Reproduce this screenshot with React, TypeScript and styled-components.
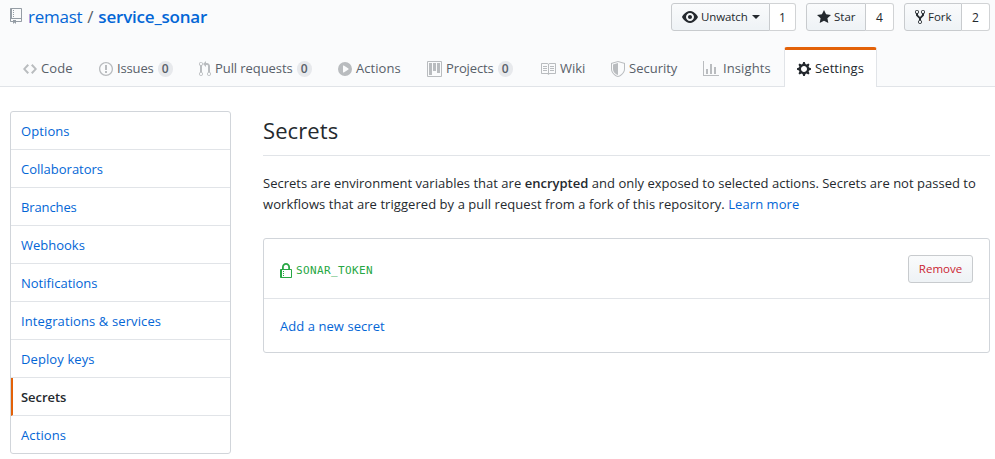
import React from "react";
import styled, { createGlobalStyle } from "styled-components";

const GlobalStyle = createGlobalStyle`
  * { box-sizing: border-box; }
  body {
    margin: 0;
    background: #fff;
    color: #24292e;
    font: 13px/21px "Open Sans", "Noto Sans", sans-serif;
    overflow: hidden;
  }
  a { color: #0366d6; text-decoration: none; }
`;

const icons = {
  repo: [12, "M4 9H3V8h1v1zm0-3H3v1h1V6zm0-2H3v1h1V4zm0-2H3v1h1V2zm8-1v12c0 .55-.45 1-1 1H6v2l-1.5-1.5L3 16v-2H1c-.55 0-1-.45-1-1V1c0-.55.45-1 1-1h10c.55 0 1 .45 1 1zm-1 10H1v2h2v-1h3v1h5v-2zm0-10H2v9h9V1z"],
  eye: [16, "M8.06 2C3 2 0 8 0 8s3 6 8.06 6C13 14 16 8 16 8s-3-6-7.94-6zM8 12c-2.2 0-4-1.78-4-4 0-2.2 1.8-4 4-4 2.22 0 4 1.8 4 4 0 2.22-1.78 4-4 4zm2-4c0 1.11-.89 2-2 2-1.11 0-2-.89-2-2 0-1.11.89-2 2-2 1.11 0 2 .89 2 2z"],
  star: [14, "M14 6l-4.9-.64L7 1 4.9 5.36 0 6l3.6 3.26L2.67 14 7 11.67 11.33 14l-.93-4.74L14 6z"],
  fork: [10, "M8 1a1.993 1.993 0 00-1 3.72V6L5 8 3 6V4.72A1.993 1.993 0 002 1a1.993 1.993 0 00-1 3.72V6.5l3 3v1.78A1.993 1.993 0 005 15a1.993 1.993 0 001-3.72V9.5l3-3V4.72A1.993 1.993 0 008 1zM2 4.2C1.34 4.2.8 3.65.8 3c0-.65.55-1.2 1.2-1.2.65 0 1.2.55 1.2 1.2 0 .65-.55 1.2-1.2 1.2zm3 10c-.66 0-1.2-.55-1.2-1.2 0-.65.55-1.2 1.2-1.2.65 0 1.2.55 1.2 1.2 0 .65-.55 1.2-1.2 1.2zm3-10c-.66 0-1.2-.55-1.2-1.2 0-.65.55-1.2 1.2-1.2.65 0 1.2.55 1.2 1.2 0 .65-.55 1.2-1.2 1.2z"],
  code: [14, "M9.5 3L8 4.5 11.5 8 8 11.5 9.5 13 14 8 9.5 3zm-5 0L0 8l4.5 5L6 11.5 2.5 8 6 4.5 4.5 3z"],
  issue: [14, "M7 2.3c3.14 0 5.7 2.56 5.7 5.7s-2.56 5.7-5.7 5.7A5.71 5.71 0 011.3 8c0-3.14 2.56-5.7 5.7-5.7zM7 1C3.14 1 0 4.14 0 8s3.14 7 7 7 7-3.14 7-7-3.14-7-7-7zm1 3H6v5h2V4zm0 6H6v2h2v-2z"],
  pull: [12, "M11 11.28V5c-.03-.78-.34-1.47-.94-2.06C9.46 2.35 8.78 2.03 8 2H7V0L4 3l3 3V4h1c.27.02.48.11.69.31.21.2.3.42.31.69v6.28A1.993 1.993 0 0010 15a1.993 1.993 0 001-3.72zm-1 2.92c-.66 0-1.2-.55-1.2-1.2 0-.65.55-1.2 1.2-1.2.65 0 1.2.55 1.2 1.2 0 .65-.55 1.2-1.2 1.2zM4 3c0-1.11-.89-2-2-2a1.993 1.993 0 00-1 3.72v6.56A1.993 1.993 0 002 15a1.993 1.993 0 001-3.72V4.72c.59-.34 1-.98 1-1.72zm-.8 10c0 .66-.55 1.2-1.2 1.2-.65 0-1.2-.55-1.2-1.2 0-.65.55-1.2 1.2-1.2.65 0 1.2.55 1.2 1.2zM2 4.2C1.34 4.2.8 3.65.8 3c0-.65.55-1.2 1.2-1.2.65 0 1.2.55 1.2 1.2 0 .65-.55 1.2-1.2 1.2z"],
  play: [14, "M14 8A7 7 0 110 8a7 7 0 0114 0zm-8.223 3.482l4.599-3.066a.5.5 0 000-.832L5.777 4.518A.5.5 0 005 4.934v6.132a.5.5 0 00.777.416z"],
  project: [15, "M10 12h3V2h-3v10zm-4-2h3V2H6v8zm-4 4h3V2H2v12zm-1 1h13V1H1v14zM14 0H1a1 1 0 00-1 1v14a1 1 0 001 1h13a1 1 0 001-1V1a1 1 0 00-1-1z"],
  book: [16, "M3 5h4v1H3V5zm0 3h4V7H3v1zm0 2h4V9H3v1zm11-5h-4v1h4V5zm0 2h-4v1h4V7zm0 2h-4v1h4V9zm2-6v9c0 .55-.45 1-1 1H9.5l-1 1-1-1H2c-.55 0-1-.45-1-1V3c0-.55.45-1 1-1h5.5l1 1 1-1H15c.55 0 1 .45 1 1zm-8 .5L7.5 3H2v9h6V3.5zm7-.5H9.5l-.5.5V12h6V3z"],
  shield: [14, "M0 2l7-2 7 2v6.02C14 12.69 8.69 16 7 16c-1.69 0-7-3.31-7-7.98V2zm1 .75L7 1l6 1.75v5.268C13 12.104 8.449 15 7 15c-1.449 0-6-2.896-6-6.982V2.75zm1 .75L7 2v12c-1.207 0-5-2.482-5-5.985V3.5z"],
  graph: [16, "M16 14v1H0V0h1v14h15zM5 13H3V8h2v5zm4 0H7V3h2v10zm4 0h-2V6h2v7z"],
  gear: [14, "M14 8.77v-1.6l-1.94-.64-.45-1.09.88-1.84-1.13-1.13-1.81.91-1.09-.45-.69-1.92h-1.6l-.63 1.94-1.11.45-1.84-.88-1.13 1.13.91 1.81-.45 1.09L0 7.23v1.59l1.94.64.45 1.09-.88 1.84 1.13 1.13 1.81-.91 1.09.45.69 1.92h1.59l.63-1.94 1.11-.45 1.84.88 1.13-1.13-.92-1.81.47-1.09L14 8.75v.02zM7 11c-1.66 0-3-1.34-3-3s1.34-3 3-3 3 1.34 3 3-1.34 3-3 3z"],
  lock: [12, "M4 13H3v-1h1v1zm8-6v7c0 .55-.45 1-1 1H1c-.55 0-1-.45-1-1V7c0-.55.45-1 1-1h1V4c0-2.2 1.8-4 4-4s4 1.8 4 4v2h1c.55 0 1 .45 1 1zM3.8 6h4.41V4c0-1.22-.98-2.2-2.2-2.2-1.22 0-2.2.98-2.2 2.2v2H3.8zM11 7H2v7h9V7zM4 8H3v1h1V8zm0 2H3v1h1v-1z"],
} as const;

type IconName = keyof typeof icons;

const Svg = styled.svg`
  display: block;
  flex: none;
  fill: currentColor;
`;

function Icon({ name }: { name: IconName }) {
  const [width, d] = icons[name];
  return (
    <Svg width={width} height={16} viewBox={`0 0 ${width} 16`} aria-hidden="true">
      <path fillRule="evenodd" d={d} />
    </Svg>
  );
}

const Label = styled.span<{ $spacing?: number }>`
  letter-spacing: ${(p) => p.$spacing ?? 0}px;
  white-space: nowrap;
`;

const Header = styled.header`
  display: flex;
  flex-direction: column;
  justify-content: space-between;
  height: 87px;
  background: #fafbfc;
  border-bottom: 1px solid #e1e4e8;
`;

const TitleBar = styled.div`
  display: flex;
  justify-content: space-between;
  padding: 3px 5px 0 10px;
`;

const RepoTitle = styled.h1`
  display: flex;
  height: 28px;
  margin: 0;
  font-size: 17px;
  line-height: 28px;
  font-weight: 400;
  color: #586069;
`;

const RepoIcon = styled.span`
  padding-top: 5px;
  margin-right: 6px;
  color: #959da5;
`;

const Slash = styled.span`
  width: 16px;
  text-align: center;
`;

const RepoName = styled.a`
  font-weight: 600;
  letter-spacing: -0.2px;
`;

const Actions = styled.div`
  display: flex;
  gap: 10px;
`;

const ActionGroup = styled.div`
  display: flex;
  height: 28px;
  font-size: 11.5px;
  line-height: 28px;
  font-weight: 500;
`;

const ActionButton = styled.button<{ $width: number }>`
  display: flex;
  align-items: center;
  width: ${(p) => p.$width}px;
  height: 28px;
  padding: 0 10px;
  gap: 3px;
  border: 1px solid #c8cbce;
  border-radius: 3px 0 0 3px;
  background: linear-gradient(#fafbfc, #eff3f6 90%);
  color: #24292e;
  font: inherit;
`;

const Caret = styled.span`
  margin-left: 1px;
  border: 4px solid transparent;
  border-top-color: currentColor;
  border-bottom: 0;
`;

const Count = styled.a<{ $width: number }>`
  width: ${(p) => p.$width}px;
  border: 1px solid #d1d3d5;
  border-left: 0;
  border-radius: 0 3px 3px 0;
  background: #fff;
  color: #24292e;
  font-size: 12px;
  text-align: center;
`;

const Tabs = styled.nav`
  display: flex;
  height: 40px;
  padding-left: 10px;
  margin-bottom: -1px;
`;

const Tab = styled.a<{ $width: number; $active?: boolean }>`
  display: flex;
  align-items: center;
  gap: 4px;
  width: ${(p) => p.$width}px;
  padding: 0 0 0 12px;
  border: 1px solid transparent;
  border-top-width: 3px;
  border-bottom: 0;
  border-radius: 3px 3px 0 0;
  && { color: ${(p) => (p.$active ? "#24292e" : "#586069")}; }
  ${(p) => p.$active && "background: #fff; border-color: #e36209 #e1e4e8 transparent;"}
`;

const TabIcon = styled.span<{ $active?: boolean }>`
  color: ${(p) => (p.$active ? "#24292e" : "#b9bcbf")};
`;

const Badge = styled.span`
  width: 15px;
  height: 16px;
  border-radius: 8px;
  background: #e7e9ec;
  font-size: 12px;
  line-height: 16px;
  font-weight: 600;
  text-align: center;
`;

const Page = styled.main`
  display: grid;
  grid-template-columns: 221px 727px;
  column-gap: 32px;
  align-items: start;
  padding: 24px 0 0 10px;
`;

const Menu = styled.nav`
  border: 1px solid #d1d5da;
  border-radius: 3px;
`;

const MenuItem = styled.a<{ $active?: boolean }>`
  display: block;
  height: 38px;
  padding-left: ${(p) => (p.$active ? 8 : 10)}px;
  border-left: ${(p) => (p.$active ? "2px solid #e36209" : "0")};
  border-bottom: 1px solid #e1e4e8;
  line-height: 38px;
  && { color: ${(p) => (p.$active ? "#24292e" : "#0366d6")}; }
  font-weight: ${(p) => (p.$active ? 600 : 400)};
  &:last-child { height: 37px; border-bottom: 0; }
`;

const Heading = styled.h2`
  height: 45px;
  margin: 0 0 17px;
  border-bottom: 1px solid #e1e4e8;
  font-size: 22px;
  line-height: 39px;
  font-weight: 400;
  letter-spacing: 0.1px;
`;

const Description = styled.p`
  margin: 0 0 23px;
  white-space: nowrap;
  strong { font-weight: 600; }
`;

const SecretBox = styled.section`
  border: 1px solid #d1d5da;
  border-radius: 3px;
`;

const SecretRow = styled.div`
  display: flex;
  align-items: center;
  justify-content: space-between;
  height: 60px;
  padding: 0 16px;
  border-bottom: 1px solid #e1e4e8;
`;

const SecretName = styled.div`
  display: flex;
  align-items: center;
  gap: 4px;
  padding-top: 4px;
  color: #28a745;
`;

const SecretCode = styled.code`
  font: 11px/16px "DejaVu Sans Mono", monospace;
  letter-spacing: 0.38px;
`;

const RemoveButton = styled.button`
  width: 65px;
  height: 28px;
  padding: 0;
  border: 1px solid #c8cbce;
  border-radius: 3px;
  background: linear-gradient(#fafbfc, #eff3f6 90%);
  color: #cb2431;
  font: 500 11.5px/26px "Open Sans", sans-serif;
`;

const AddRow = styled.div`
  height: 53px;
  padding-left: 16px;
  line-height: 54px;
`;

type TabData = { icon: IconName; label: string; width: number; spacing: number; count?: number; active?: boolean };

const tabs: TabData[] = [
  { icon: "code", label: "Code", width: 76, spacing: 0.1 },
  { icon: "issue", label: "Issues", width: 100, spacing: -0.15, count: 0 },
  { icon: "pull", label: "Pull requests", width: 139, spacing: -0.08, count: 0 },
  { icon: "play", label: "Actions", width: 89, spacing: 0.05 },
  { icon: "project", label: "Projects", width: 113, spacing: -0.12, count: 0 },
  { icon: "book", label: "Wiki", width: 71, spacing: 0 },
  { icon: "shield", label: "Security", width: 92, spacing: 0 },
  { icon: "graph", label: "Insights", width: 94, spacing: 0.1 },
  { icon: "gear", label: "Settings", width: 93, spacing: 0.1, active: true },
];

const menu: { label: string; spacing: number; active?: boolean }[] = [
  { label: "Options", spacing: 0.1 },
  { label: "Collaborators", spacing: 0 },
  { label: "Branches", spacing: -0.12 },
  { label: "Webhooks", spacing: 0 },
  { label: "Notifications", spacing: 0 },
  { label: "Integrations & services", spacing: 0.11 },
  { label: "Deploy keys", spacing: 0.1 },
  { label: "Secrets", spacing: -0.05, active: true },
  { label: "Actions", spacing: 0.1 },
];

export default function App() {
  return (
    <>
      <GlobalStyle />
      <Header>
        <TitleBar>
          <RepoTitle>
            <RepoIcon><Icon name="repo" /></RepoIcon>
            <a href="#owner"><Label $spacing={-0.25}>remast</Label></a>
            <Slash>/</Slash>
            <RepoName href="#repo">service_sonar</RepoName>
          </RepoTitle>
          <Actions>
            <ActionGroup>
              <ActionButton $width={99}><Icon name="eye" /><Label $spacing={-0.1}>Unwatch</Label><Caret /></ActionButton>
              <Count $width={26} href="#watchers">1</Count>
            </ActionGroup>
            <ActionGroup>
              <ActionButton $width={60}><Icon name="star" /><Label>Star</Label></ActionButton>
              <Count $width={28} href="#stars">4</Count>
            </ActionGroup>
            <ActionGroup>
              <ActionButton $width={58}><Icon name="fork" /><Label>Fork</Label></ActionButton>
              <Count $width={28} href="#forks">2</Count>
            </ActionGroup>
          </Actions>
        </TitleBar>
        <Tabs>
          {tabs.map((t) => (
            <Tab key={t.label} href="#tab" $width={t.width} $active={t.active}>
              <TabIcon $active={t.active}><Icon name={t.icon} /></TabIcon>
              <Label $spacing={t.spacing}>{t.label}</Label>
              {t.count !== undefined && <Badge>{t.count}</Badge>}
            </Tab>
          ))}
        </Tabs>
      </Header>
      <Page>
        <Menu>
          {menu.map((m) => (
            <MenuItem key={m.label} href="#menu" $active={m.active}>
              <Label $spacing={m.spacing}>{m.label}</Label>
            </MenuItem>
          ))}
        </Menu>
        <section>
          <Heading>Secrets</Heading>
          <Description>
            <Label $spacing={0.018}>Secrets are environment variables that are <strong>encrypted</strong> and only exposed to selected actions. Secrets are not passed to</Label>
            <br />
            <Label $spacing={0.062}>workflows that are triggered by a pull request from a fork of this repository. <a href="#more">Learn more</a></Label>
          </Description>
          <SecretBox>
            <SecretRow>
              <SecretName><Icon name="lock" /><SecretCode>SONAR_TOKEN</SecretCode></SecretName>
              <RemoveButton>Remove</RemoveButton>
            </SecretRow>
            <AddRow><a href="#add"><Label $spacing={0.06}>Add a new secret</Label></a></AddRow>
          </SecretBox>
        </section>
      </Page>
    </>
  );
}
